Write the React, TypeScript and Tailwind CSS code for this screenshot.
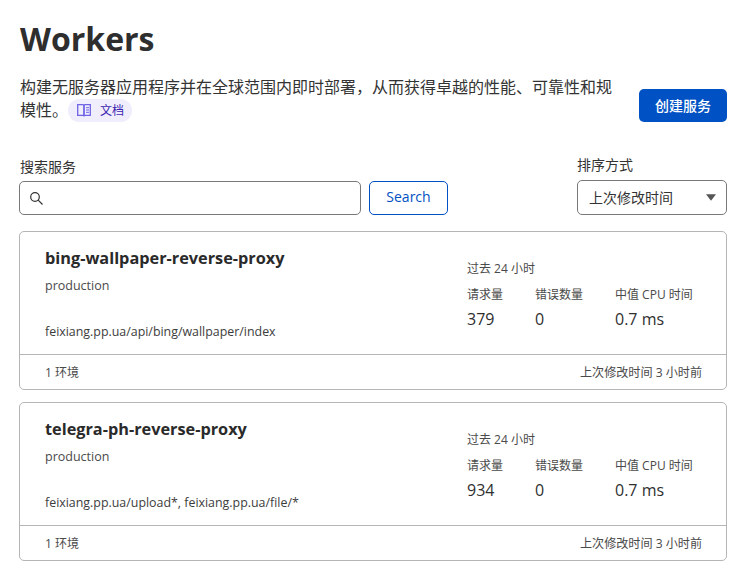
import React from "react";

const font = "font-['Open_Sans','Noto_Sans_CJK_SC',sans-serif]";

function Card({ name, routes, requests }: { name: string; routes: string; requests: string }) {
  return (
    <div className="rounded-[5px] border border-[#b5b5b5] bg-white">
      <div className="flex h-[122px]">
        <div className="w-[421px] pl-[25px] pt-[13px]">
          <div className="text-[16.3px] leading-[26px] font-bold text-[#2a2a2a]">{name}</div>
          <div className="mt-[6px] text-[12.5px] leading-[18px] text-[#4a4a4a]">production</div>
          <div className="mt-[28px] text-[12.4px] leading-[18px] text-[#3c3c3c]">{routes}</div>
        </div>
        <div className="pl-[26px] pt-[28px]">
          <div className="text-[12px] leading-[18px] text-[#4a4a4a]">过去 24 小时</div>
          <div className="mt-[8px] flex">
            <div className="w-[68px]">
              <div className="text-[12px] leading-[18px] text-[#4a4a4a]">请求量</div>
              <div className="mt-[4px] text-[16px] leading-[22px] text-[#2f2f2f]">{requests}</div>
            </div>
            <div className="w-[80px]">
              <div className="text-[12px] leading-[18px] text-[#4a4a4a]">错误数量</div>
              <div className="mt-[4px] text-[16px] leading-[22px] text-[#2f2f2f]">0</div>
            </div>
            <div>
              <div className="text-[12px] leading-[18px] text-[#4a4a4a]">中值 CPU 时间</div>
              <div className="mt-[4px] text-[16px] leading-[22px] text-[#2f2f2f]">0.7 ms</div>
            </div>
          </div>
        </div>
      </div>
      <div className="flex h-[35px] items-center justify-between border-t border-[#b5b5b5] pl-[25px] pr-[24px] pt-[2px] text-[12px] text-[#4a4a4a]">
        <span>1 环境</span>
        <span className="text-[12.1px]">上次修改时间 3 小时前</span>
      </div>
    </div>
  );
}

export default function App() {
  return (
    <div className={`${font} min-h-[568px] overflow-hidden bg-white pl-[19px] pr-[12px] text-[#333]`}>
      <h1 className="ml-px pt-[16px] text-[32px] leading-[46px] font-bold text-[#2e2e2e]">Workers</h1>
      <div className="mt-[14px] flex items-end justify-between">
        <p className="ml-px w-[600px] text-[16px] leading-[23px] text-[#333]">
          构建无服务器应用程序并在全球范围内即时部署，从而获得卓越的性能、可靠性和规模性。
          <span className="inline-flex h-[23px] w-[64px] items-center gap-[9px] rounded-full bg-[#f0edfd] pl-[9px] align-[-1px] text-[12px] text-[#3a1fb0]">
            <svg width="14" height="13" viewBox="0 0 14 13" fill="none" stroke="#6f63e6" strokeWidth="1.300">
              <path d="M.7.700h5.200c.8 0 1.100.4 1.100 1.100v10.500c0-.7-.4-1-1.100-1H.7z" />
              <path d="M13.300.700H8.100C7.300.700 7 1.100 7 1.800v10.500c0-.7.4-1 1.100-1h5.200z" />
              <path d="M9 3.700h3M9 6h3M9 8.300h3" strokeWidth="1" />
            </svg>
            文档
          </span>
        </p>
        <button className="h-[33px] w-[88px] rounded-[5px] bg-[#0051c3] text-[14px] font-medium text-white">创建服务</button>
      </div>
      <div className="mt-[33px] flex items-end">
        <div className="w-[342px]">
          <label className="ml-px block pt-[1px] text-[14px] leading-[18px] text-[#333]">搜索服务</label>
          <div className="mt-[5px] flex h-[34px] items-center rounded-[5px] border border-[#797979] pl-[9px]">
            <svg width="15" height="15" viewBox="0 0 15 15" fill="none" stroke="#333" strokeWidth="1.200">
              <circle cx="6" cy="6" r="4.300" />
              <path d="M9.200 9.200l4.300 4.300" />
            </svg>
          </div>
        </div>
        <button className="ml-[8px] h-[34px] w-[79px] rounded-[5px] border border-[#0051c3] pb-[3px] text-[14px] text-[#0051c3]">Search</button>
        <div className="ml-auto w-[150px]">
          <label className="block pt-[1px] text-[14px] leading-[18px] text-[#333]">排序方式</label>
          <div className="mt-[6px] flex h-[35px] items-center justify-between rounded-[5px] border border-[#797979] pl-[11px] pr-[10px] text-[14px] text-[#333]">
            <span>上次修改时间</span>
            <svg width="10" height="7" viewBox="0 0 11 7" fill="#555"><path d="M0 0h11L5.500 7z" /></svg>
          </div>
        </div>
      </div>
      <div className="mt-[16px] flex flex-col gap-[12px]">
        <Card name="bing-wallpaper-reverse-proxy" routes="feixiang.pp.ua/api/bing/wallpaper/index" requests="379" />
        <Card name="telegra-ph-reverse-proxy" routes="feixiang.pp.ua/upload*, feixiang.pp.ua/file/*" requests="934" />
      </div>
    </div>
  );
}
